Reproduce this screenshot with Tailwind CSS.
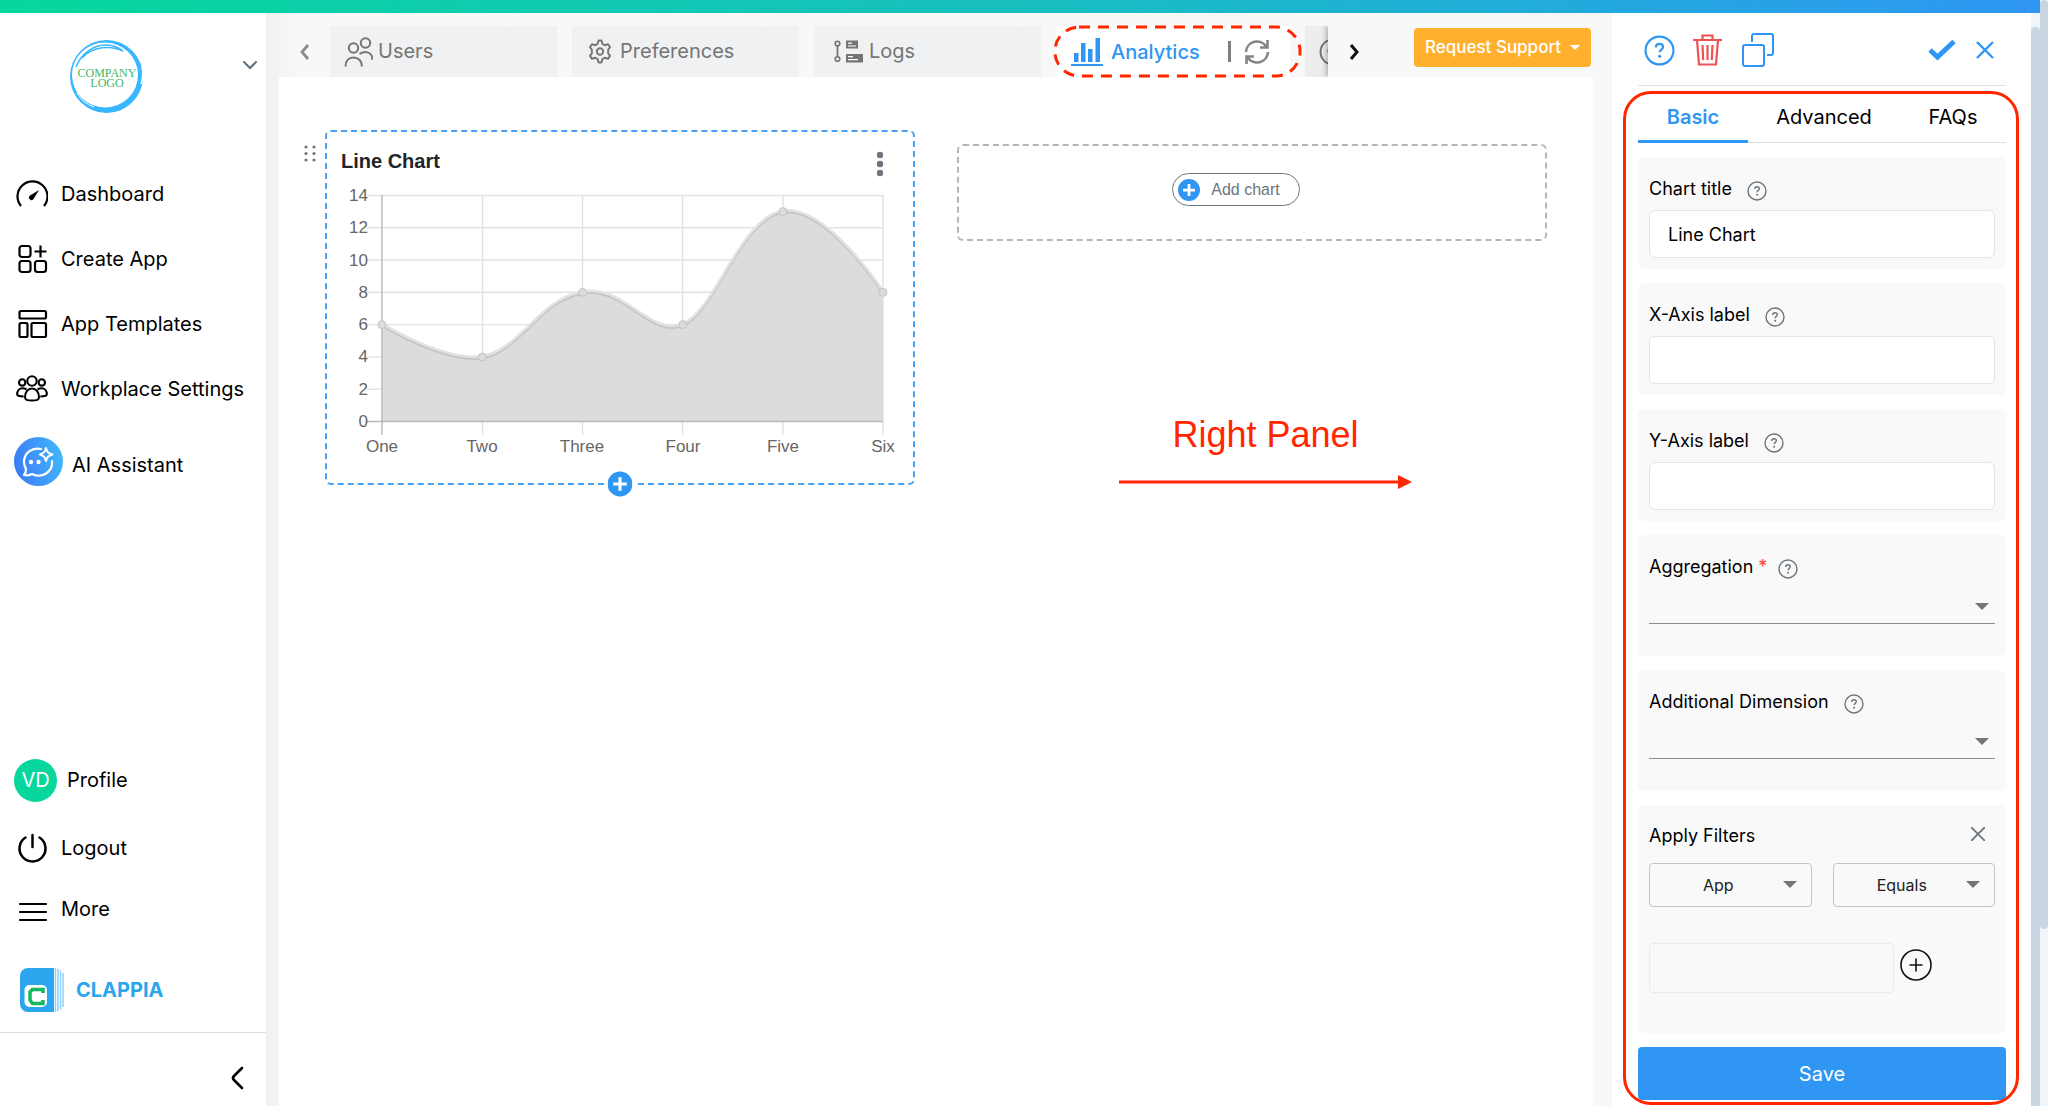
<!DOCTYPE html>
<html lang="en">
<head>
    <meta charset="UTF-8">
    <meta name="viewport" content="width=device-width, initial-scale=1.0">
    <title>Clappia - Analytics</title>
    <script src="https://cdn.jsdelivr.net/npm/@tailwindcss/browser@4"></script>
</head>
<body class="flex h-screen overflow-hidden bg-white font-[Inter,sans-serif] text-black">
    <!-- Shared icons -->
    <svg class="hidden">
        <symbol id="icon-help" viewBox="0 0 20 20">
            <circle cx="10" cy="10" r="9" fill="none" stroke="currentColor" stroke-width="1.4"></circle>
            <path d="M7.7 8c0-1.500 1-2.300 2.300-2.300s2.300.8 2.300 2c0 1.600-2.200 1.800-2.200 3.500" fill="none" stroke="currentColor" stroke-width="1.400"></path>
            <circle cx="10.100" cy="13.700" r="1" fill="currentColor"></circle>
        </symbol>
        <symbol id="icon-plus" viewBox="0 0 24 24">
            <circle cx="12" cy="12" r="12" fill="#2f96f3"></circle>
            <path d="M12 5.500v13M5.500 12h13" stroke="#fff" stroke-width="3"></path>
        </symbol>
        <symbol id="icon-caret" viewBox="0 0 14 7">
            <path d="M0 0h14L7 7z" fill="currentColor"></path>
        </symbol>
    </svg>

    <div class="flex min-w-0 flex-1 flex-col">
        <!-- Top gradient bar -->
        <div class="h-[13px] shrink-0 bg-linear-to-r from-[#07d79c] via-[#18bfbf] to-[#2f96f3]"></div>

        <div class="flex min-h-0 flex-1">
            <!-- Sidebar -->
            <aside class="flex w-[266px] shrink-0 flex-col text-xl">
                <div class="flex h-[148px] items-start justify-between pt-[26px] pr-[6px] pl-[69px]">
                    <svg class="h-[75px] w-[75px]" viewBox="0 0 75 75">
                        <path fill="#38b6ff" fill-rule="evenodd" d="M37.500 1a36.500 36.500 0 1 1 0 73 36.500 36.500 0 1 1 0-73zM36 3.500a33 32.500 0 1 0 0 65 33 32.500 0 1 0 0-65z"></path>
                        <path d="M7 28C12 15 24 6 37 6c7 0 12 2 17 6C42 6 24 7 13 19" fill="none" stroke="#38b6ff" stroke-width="1.500"></path>
                        <path d="M2 24C5 16 9 11 14 7M73 28c1 6 1 12-1 17" fill="none" stroke="#fff" stroke-width="1.500"></path>
                        <path d="M8 54c4 7 9 11 17 14" fill="none" stroke="#fff" stroke-width="1"></path>
                        <text x="38" y="38" font-family="Liberation Serif, serif" font-size="12" fill="#3bb86b" text-anchor="middle">COMPANY</text>
                        <text x="38" y="48" font-family="Liberation Serif, serif" font-size="12" fill="#3bb86b" text-anchor="middle">LOGO</text>
                    </svg>
                    <button class="mt-4 p-[2px]" aria-label="Switch workplace">
                        <svg class="h-4 w-4" viewBox="0 0 16 16" fill="none" stroke="#5f6f7a" stroke-width="2" stroke-linecap="round"><path d="M2 5l6 6 6-6"></path></svg>
                    </button>
                </div>

                <nav>
                    <a href="#" class="flex h-[65px] items-center gap-[13px] pl-4">
                        <svg class="h-8 w-8" viewBox="0 0 32 32" fill="none" stroke="#000" stroke-width="2"><path d="M5 28A15 15 0 1 1 28 28" stroke-width="2.200"></path><path d="M23 12l-5.500 9a2.500 2.500 0 1 1-3.500-3.500z" fill="#000" stroke="none"></path></svg>
                        Dashboard
                    </a>
                    <a href="#" class="flex h-[65px] items-center gap-[13px] pl-4">
                        <svg class="h-8 w-8" viewBox="0 0 32 32" fill="none" stroke="#000" stroke-width="2.200"><rect x="3.500" y="3" width="11" height="11" rx="2.500"></rect><rect x="3.500" y="18" width="11" height="11" rx="2.500"></rect><rect x="19" y="18" width="11" height="11" rx="2.500"></rect><path d="M24.500 2.500v12M18.500 8.500h12"></path></svg>
                        Create App
                    </a>
                    <a href="#" class="flex h-[65px] items-center gap-[13px] pl-4">
                        <svg class="h-8 w-8" viewBox="0 0 32 32" fill="none" stroke="#000" stroke-width="2.200"><rect x="3.500" y="3" width="26.500" height="7.500" rx="1.500"></rect><rect x="3.500" y="15" width="8" height="14" rx="1.500"></rect><rect x="15.500" y="15" width="14.500" height="14" rx="1.500"></rect></svg>
                        App Templates
                    </a>
                    <a href="#" class="flex h-[65px] items-center gap-[13px] pl-4">
                        <svg class="h-8 w-8" viewBox="0 0 32 32" fill="none" stroke="#000" stroke-width="2.100"><circle cx="16" cy="8" r="4.700"></circle><circle cx="6.200" cy="9.500" r="3.200"></circle><circle cx="25.800" cy="9.500" r="3.200"></circle><path d="M9 24c0-5 3-8.500 7-8.500s7 3.500 7 8.500c0 3-2 3.500-7 3.500S9 27 9 24zM10.500 16.500c-1-.7-2.500-1.200-4-1.200-3 0-5.300 2.500-5.300 6 0 1.700 2 2.200 6.500 2.200M21.500 16.500c1-.7 2.500-1.200 4-1.200 3 0 5.300 2.500 5.300 6 0 1.700-2 2.200-6.500 2.200"></path></svg>
                        Workplace Settings
                    </a>
                    <a href="#" class="flex h-20 items-center gap-[9px] pl-[14px]">
                        <svg class="h-[49px] w-[49px]" viewBox="0 0 49 49" fill="none">
                            <defs><linearGradient id="ai" x1="0" y1="0.600" x2="1" y2="0.400"><stop stop-color="#3b7bf6"></stop><stop offset="1" stop-color="#42b6fb"></stop></linearGradient></defs>
                            <circle cx="24.500" cy="24.500" r="24.500" fill="url(#ai)"></circle>
                            <path d="M27 12c-9-2-17 4-17 13 0 3 1 5 2 7 0 3-1 5-2 6 3 1 6 0 8-1 10 5 21-2 20-13" stroke="#fff" stroke-width="2.200" stroke-linecap="round" stroke-linejoin="round"></path>
                            <path d="M32 11c1 4 2 5 6.500 6.500C34 19 33 20 32 24c-1-4-2-5-6-6.500C30 16 31 15 32 11z" stroke="#fff" stroke-width="2" stroke-linejoin="round"></path>
                            <circle cx="17" cy="25" r="2.200" fill="#fff"></circle><circle cx="24.500" cy="25" r="2.200" fill="#fff"></circle>
                        </svg>
                        <span class="pt-2">AI Assistant</span>
                    </a>
                </nav>

                <nav class="mt-auto">
                    <a href="#" class="flex h-[70px] items-center gap-[10px] pl-[14px]">
                        <span class="flex h-[43px] w-[43px] items-center justify-center rounded-full bg-[#07d79c] text-white">VD</span>
                        Profile
                    </a>
                    <a href="#" class="flex h-[66px] items-center gap-[13px] pl-4">
                        <svg class="h-8 w-8" viewBox="0 0 32 32" fill="none" stroke="#000" stroke-width="2.500" stroke-linecap="round"><path d="M16.500 3v12M9.500 5.500a13 13 0 1 0 14 0"></path></svg>
                        Logout
                    </a>
                    <a href="#" class="flex h-[62px] items-center gap-[13px] pl-4">
                        <svg class="h-8 w-8" viewBox="0 0 32 32" stroke="#000" stroke-width="2.200" stroke-linecap="round"><path d="M4 8h26M4 16h26M4 24h26"></path></svg>
                        <span class="pb-[6px]">More</span>
                    </a>
                    <a href="#" class="flex h-[90px] items-center gap-3 border-b border-[#dedede] pt-1 pl-5 text-xl font-bold text-[#2aa5ee]">
                        <svg class="h-11 w-11" viewBox="0 0 44 44">
                            <path d="M8 0h26v44H8a8 8 0 0 1-8-8V8a8 8 0 0 1 8-8z" fill="#2aa5ee"></path>
                            <path d="M35.500 0v44M38 1v42M40.500 2.500v39M43 5v34" stroke="#8fd0f8" stroke-width="1.500"></path>
                            <rect x="4.500" y="17" width="22.500" height="22" rx="5" fill="#fff"></rect>
                            <path d="M23 25v-3.500H12.500L10 24v8l2.500 3.500H23V32" fill="none" stroke="#11b85f" stroke-width="3.500"></path>
                        </svg>
                        CLAPPIA
                    </a>
                </nav>
                <div class="flex h-[73px] shrink-0 items-center justify-end pt-4 pr-[17px]">
                    <button aria-label="Collapse sidebar"><svg class="h-6 w-6" viewBox="0 0 24 24" fill="none" stroke="#000" stroke-width="2.600" stroke-linecap="round"><path d="M17 2l-8 8q-2 2 0 4l8 8"></path></svg></button>
                </div>
            </aside>

            <!-- Workspace -->
            <main class="flex min-w-0 flex-1 flex-col bg-[#f8f8f8] bg-linear-to-r from-[#f0f0f0] to-[#f8f8f8] to-[34px] pr-[19px] pl-[13px]">
                <header class="flex h-16 shrink-0 items-end text-xl text-[#757575]">
                    <button class="flex h-[51px] w-[51px] shrink-0 items-center justify-center" aria-label="Previous tabs">
                        <svg class="h-5 w-5" viewBox="0 0 20 20" fill="none" stroke="#8b8b8b" stroke-width="2.800"><path d="M13 3l-6 7 6 7"></path></svg>
                    </button>
                    <div class="flex min-w-0 flex-1 gap-[15px] overflow-hidden">
                        <button class="flex h-[51px] w-[227px] shrink-0 items-center gap-[5px] bg-[#f0f1f2] pl-[14px]">
                            <svg class="h-[30px] w-[29px]" viewBox="0 0 29 30" fill="none" stroke="#757575" stroke-width="2"><circle cx="9.500" cy="11" r="4.700"></circle><circle cx="21.500" cy="6" r="4.700"></circle><path d="M1.500 29.500c0-5.500 3-9 8-9s8.500 3.500 8.500 9M15.500 17c2-1.500 4-2 6-2 4.500 0 7 3.500 7 8"></path></svg>
                            <span class="pb-[2px]">Users</span>
                        </button>
                        <button class="flex h-[51px] w-[227px] shrink-0 items-center gap-2 bg-[#f0f1f2] pl-4">
                            <svg class="h-[25px] w-6" viewBox="0 0 24 26" fill="none" stroke="#757575" stroke-width="2" stroke-linejoin="round"><path d="M10.500 1.500h3l1 3.500 2.500 1.500 3.500-1 2 3-2 2.500v4l2 2.500-2 3-3.500-1-2.500 1.500-1 3.500h-3l-1-3.500L7 19.500l-3.500 1-2-3 2-2.500v-4l-2-2.500 2-3 3.500 1L9.500 5z"></path><circle cx="12" cy="13" r="3.300"></circle></svg>
                            <span class="pb-[2px]">Preferences</span>
                        </button>
                        <button class="flex h-[51px] w-[227px] shrink-0 items-center gap-[6px] bg-[#f0f1f2] pl-5">
                            <svg class="h-[23px] w-[29px]" viewBox="0 0 29 23" fill="none" stroke="#757575"><circle cx="3.500" cy="3.500" r="2.300" stroke-width="1.600"></circle><circle cx="3.500" cy="19" r="2.300" stroke-width="1.600"></circle><path d="M3.500 6v11" stroke-width="1.800"></path><path d="M12 0.500h12v8H12zM12 14h17v8.500H12z" fill="#757575" stroke="none"></path><path d="M14 3.200h4M14 6h8M14 16.700h5M14 19.700h10" stroke="#fff" stroke-width="1.200"></path></svg>
                            <span class="pb-[2px]">Logs</span>
                        </button>
                        <div class="flex h-[51px] w-[234px] shrink-0 items-center bg-white pl-[15px]">
                            <button class="flex items-center gap-2 font-medium text-[#2f96f3]">
                                <svg class="h-[28px] w-8" viewBox="0 0 32 28" fill="#2f96f3"><path d="M3 15h4.500v9H3zM10 5h4.500v19H10zM17 11h4.500v13H17zM24.500 0H29v24h-4.500zM0 26h32v2H0z"></path></svg>
                                Analytics
                            </button>
                            <span class="mr-[13px] ml-7 h-[21px] w-[3px] bg-[#808080]"></span>
                            <button aria-label="Refresh"><svg class="h-[26px] w-[26px]" viewBox="0 0 26 26" fill="none" stroke="#858585" stroke-width="2.600"><path d="M2 13A11 11 0 0 1 22.500 8M24 13A11 11 0 0 1 3.500 18M23.500 1v7.500H16M2.500 25v-7.500H10"></path></svg></button>
                        </div>
                        <button class="flex h-[51px] w-[227px] shrink-0 items-center bg-[#ededee] pl-[14px]" aria-label="More tabs">
                            <svg class="h-7 w-7" viewBox="0 0 28 28" fill="none" stroke="#757575" stroke-width="2"><circle cx="14" cy="14" r="12.500"></circle><path d="M14 8v7M9 11v4" stroke-width="1"></path></svg>
                        </button>
                    </div>
                    <button class="flex h-[51px] w-[51px] shrink-0 items-center justify-center shadow-[-2px_0_5px_rgba(0,0,0,0.25)] [clip-path:inset(0_0_0_-8px)]" aria-label="Next tabs">
                        <svg class="h-5 w-5" viewBox="0 0 20 20" fill="none" stroke="#111" stroke-width="3"><path d="M7 3l6 7-6 7"></path></svg>
                    </button>
                    <button class="mr-[2px] mb-[10px] ml-[35px] flex h-[39px] w-[177px] shrink-0 items-center justify-center gap-[9px] rounded bg-[#ffb02e] text-[17px] font-medium text-white">
                        Request Support
                        <svg class="h-[5px] w-[10px]"><use href="#icon-caret"></use></svg>
                    </button>
                </header>

                <section class="grid flex-1 grid-cols-2 items-start gap-[42px] bg-white pt-[53px] pr-[46px] pl-[46px]">
                    <!-- Line chart card -->
                    <article class="relative rounded-md border-2 border-dashed border-[#45a1f5] pb-[26px]">
                        <svg class="absolute top-3 -left-[25px] h-5 w-4" viewBox="0 0 16 20" fill="#757575"><circle cx="4" cy="3" r="1.600"></circle><circle cx="12" cy="3" r="1.600"></circle><circle cx="4" cy="9.500" r="1.600"></circle><circle cx="12" cy="9.500" r="1.600"></circle><circle cx="4" cy="16" r="1.600"></circle><circle cx="12" cy="16" r="1.600"></circle></svg>
                        <div class="flex h-[53px] items-center justify-between pt-1 pr-[29px] pl-[14px]">
                            <h2 class="font-['Liberation_Sans',Arial,sans-serif] text-xl font-bold text-[#212529]">Line Chart</h2>
                            <button class="pt-[6px]" aria-label="Chart menu"><svg class="h-[26px] w-2" viewBox="0 0 8 26" fill="#6c757d"><circle cx="4" cy="4" r="3.200"></circle><circle cx="4" cy="13" r="3.200"></circle><circle cx="4" cy="22" r="3.200"></circle></svg></button>
                        </div>
                        <svg class="block h-auto w-full" viewBox="327 185 586 272">
                            <!-- Grid -->
                            <path d="M367 195.500H883M367 227.800H883M367 260H883M367 292.300H883M367 324.600H883M367 356.900H883M367 389.200H883M482.500 195V435M582.500 195V435M682.500 195V435M783 195V435M883 195V435" stroke="#e2e2e2" stroke-width="1.400"></path>
                            <!-- Series area -->
                            <path d="M382 324.600C382 324.600 444.700 363 482.300 357S540 299.300 582.600 292.400 649.900 337.900 682.800 324.600 739.800 218.600 783 211.600 883 292.300 883 292.300V421.500H382z" fill="#dcdcdc"></path>
                            <path d="M382 325.600C382 325.600 444.700 364 482.300 358S540 300.300 582.600 293.400 649.900 338.900 682.800 325.600 739.800 219.600 783 212.600 883 293.300 883 293.300" fill="none" stroke="#c6c6c6" stroke-width="2.500"></path>
                            <path d="M382 323.600C382 323.600 444.700 362 482.300 356S540 298.300 582.600 291.400 649.900 336.900 682.800 323.600 739.800 217.600 783 210.600 883 291.300 883 291.300" fill="none" stroke="#e2e2e2" stroke-width="2.500"></path>
                            <path d="M382 195V435M367 421.500H883" stroke="#b8b8b8" stroke-width="1.400"></path>
                            <g fill="#dcdcdc" stroke="#c4c4c4"><circle cx="382" cy="324.600" r="4"></circle><circle cx="482.300" cy="357" r="4"></circle><circle cx="582.600" cy="292.400" r="4"></circle><circle cx="682.800" cy="324.600" r="4"></circle><circle cx="783" cy="211.600" r="4"></circle><circle cx="883" cy="292.300" r="4"></circle></g>
                            <g font-family="Liberation Sans, Arial, sans-serif" font-size="17" fill="#666" text-anchor="end"><text x="368" y="201">14</text><text x="368" y="233">12</text><text x="368" y="266">10</text><text x="368" y="298">8</text><text x="368" y="330">6</text><text x="368" y="362">4</text><text x="368" y="395">2</text><text x="368" y="427">0</text></g>
                            <g font-family="Liberation Sans, Arial, sans-serif" font-size="17" fill="#666" text-anchor="middle"><text x="382" y="452">One</text><text x="482" y="452">Two</text><text x="582" y="452">Three</text><text x="683" y="452">Four</text><text x="783" y="452">Five</text><text x="883" y="452">Six</text></g>
                        </svg>
                        <button class="absolute -bottom-[14px] left-1/2 -translate-x-1/2 rounded-full bg-white px-[3px]" aria-label="Add chart below"><svg class="block h-[26px] w-[25px]"><use href="#icon-plus"></use></svg></button>
                    </article>

                    <div>
                        <div class="mt-[14px] flex h-[97px] items-start justify-center rounded-md border-2 border-dashed border-[#b4b7b9] pt-[27px] pr-8">
                            <button class="flex h-[33px] items-center gap-[11px] rounded-full border border-[#6c757d] pr-[19px] pl-[5px] font-['Liberation_Sans',Arial,sans-serif] text-base text-[#6c757d]">
                                <svg class="h-[22px] w-[22px]"><use href="#icon-plus"></use></svg>
                                Add chart
                            </button>
                        </div>
                        <!-- Annotation pointing to the settings panel -->
                        <div class="mt-[174px] flex flex-col items-center gap-5 pl-[27px]">
                            <p class="font-['Liberation_Sans',Arial,sans-serif] text-4xl text-[#ff2600]">Right Panel</p>
                            <svg class="h-[14px] w-[293px]" viewBox="0 0 293 14" fill="#ff2600"><path d="M0 5.500h279V0l14 7-14 7V8.500H0z"></path></svg>
                        </div>
                    </div>
                </section>
            </main>

            <!-- Chart settings panel -->
            <aside class="relative flex w-[419px] shrink-0 flex-col pr-[25px] pl-[26px] text-lg">
                <div class="flex h-[73px] shrink-0 items-center border-b border-[#dee2e6] pt-[2px] pr-3 pl-[6px]">
                    <button class="mr-[18px] text-[#2f96f3]" aria-label="Help"><svg class="h-[31px] w-[31px]"><use href="#icon-help"></use></svg></button>
                    <button class="mr-5" aria-label="Delete"><svg class="h-8 w-[29px]" viewBox="0 0 29 32" fill="none" stroke="#ee5253" stroke-width="2.200"><path d="M0 6h29M9.500 6V1.500h10V6M4 6l2 24.500h17L25 6M9.500 11l.7 15M14.500 11v15M19.500 11l-.7 15"></path></svg></button>
                    <button aria-label="Duplicate"><svg class="h-[34px] w-8" viewBox="0 0 32 34" fill="none" stroke="#2f96f3" stroke-width="2"><rect x="1" y="12" width="21" height="21" rx="2"></rect><path d="M10 9V3q0-2 2-2h17q2 0 2 2v17q0 2-2 2h-4"></path></svg></button>
                    <button class="ml-auto" aria-label="Confirm"><svg class="h-[22px] w-7" viewBox="0 0 28 22" fill="none" stroke="#2f96f3" stroke-width="5"><path d="M2 11l7.500 7L26 2.500"></path></svg></button>
                    <button class="ml-5" aria-label="Close"><svg class="h-[18px] w-[18px]" viewBox="0 0 18 18" stroke="#2f96f3" stroke-width="2.400"><path d="M1 1l16 16M17 1L1 17"></path></svg></button>
                </div>

                <div class="flex h-[57px] shrink-0 border-b border-[#dee2e6] text-xl">
                    <button class="-mb-px w-[110px] border-b-3 border-[#2f96f3] pt-2 font-semibold text-[#2f96f3]">Basic</button>
                    <button class="flex-1 pt-[6px]">Advanced</button>
                    <button class="w-[106px] pt-[6px]">FAQs</button>
                </div>

                <form class="mt-[14px] flex flex-col gap-[14px]">
                    <div class="rounded-md bg-[#f9f9f9] px-[11px] pt-5 pb-[11px]">
                        <div class="mb-[9px] flex h-6 items-center gap-[15px]">
                            <label for="chart-title">Chart title</label>
                            <svg class="mt-1 h-5 w-5 text-[#6c757d]"><use href="#icon-help"></use></svg>
                        </div>
                        <input id="chart-title" type="text" value="Line Chart" class="block h-12 w-full rounded-md border border-[#e4e4e4] bg-white px-[18px] text-lg">
                    </div>
                    <div class="rounded-md bg-[#f9f9f9] px-[11px] pt-5 pb-[11px]">
                        <div class="mb-[9px] flex h-6 items-center gap-[15px]">
                            <label for="x-label">X-Axis label</label>
                            <svg class="mt-1 h-5 w-5 text-[#6c757d]"><use href="#icon-help"></use></svg>
                        </div>
                        <input id="x-label" type="text" class="block h-12 w-full rounded-md border border-[#e4e4e4] bg-white px-[18px] text-lg">
                    </div>
                    <div class="rounded-md bg-[#f9f9f9] px-[11px] pt-5 pb-[11px]">
                        <div class="mb-[9px] flex h-6 items-center gap-[15px]">
                            <label for="y-label">Y-Axis label</label>
                            <svg class="mt-1 h-5 w-5 text-[#6c757d]"><use href="#icon-help"></use></svg>
                        </div>
                        <input id="y-label" type="text" class="block h-12 w-full rounded-md border border-[#e4e4e4] bg-white px-[18px] text-lg">
                    </div>
                    <div class="rounded-md bg-[#f9f9f9] px-[11px] pt-5 pb-8">
                        <div class="flex h-6 items-center gap-[11px]">
                            <label for="aggregation">Aggregation <span class="text-[#f5443a]">*</span></label>
                            <svg class="mt-1 h-5 w-5 text-[#6c757d]"><use href="#icon-help"></use></svg>
                        </div>
                        <div class="relative">
                            <select id="aggregation" class="block h-[45px] w-full appearance-none border-b border-[#8c8c8c]"><option></option></select>
                            <svg class="pointer-events-none absolute top-6 right-[6px] h-[7px] w-[14px] text-[#757575]"><use href="#icon-caret"></use></svg>
                        </div>
                    </div>
                    <div class="rounded-md bg-[#f9f9f9] px-[11px] pt-5 pb-8">
                        <div class="flex h-6 items-center gap-[15px]">
                            <label for="dimension">Additional Dimension</label>
                            <svg class="mt-1 h-5 w-5 text-[#6c757d]"><use href="#icon-help"></use></svg>
                        </div>
                        <div class="relative">
                            <select id="dimension" class="block h-[45px] w-full appearance-none border-b border-[#8c8c8c]"><option></option></select>
                            <svg class="pointer-events-none absolute top-6 right-[6px] h-[7px] w-[14px] text-[#757575]"><use href="#icon-caret"></use></svg>
                        </div>
                    </div>
                    <div class="rounded-md bg-[#f9f9f9] px-[11px] pt-[19px] pb-10">
                        <div class="mb-[15px] flex h-6 items-center justify-between pr-[10px]">
                            <span>Apply Filters</span>
                            <button type="button" class="mb-1" aria-label="Remove filter"><svg class="h-[14px] w-[14px]" viewBox="0 0 14 14" stroke="#6c757d" stroke-width="1.800"><path d="M0 0l14 14M14 0L0 14"></path></svg></button>
                        </div>
                        <div class="grid grid-cols-2 gap-[21px] text-base text-[#212121]">
                            <div class="relative">
                                <select aria-label="Filter field" class="block h-11 w-full appearance-none rounded border border-[#c4c4c4] pr-6 [text-align-last:center]"><option>App</option></select>
                                <svg class="pointer-events-none absolute top-[18px] right-[15px] h-[7px] w-[14px] text-[#757575]"><use href="#icon-caret"></use></svg>
                            </div>
                            <div class="relative">
                                <select aria-label="Filter condition" class="block h-11 w-full appearance-none rounded border border-[#c4c4c4] pr-6 [text-align-last:center]"><option>Equals</option></select>
                                <svg class="pointer-events-none absolute top-[18px] right-[15px] h-[7px] w-[14px] text-[#757575]"><use href="#icon-caret"></use></svg>
                            </div>
                        </div>
                        <div class="mt-9 flex items-center gap-[6px]">
                            <input type="text" aria-label="Filter value" class="h-[50px] w-[245px] rounded border border-[#ebebeb] px-4">
                            <button type="button" class="mb-[6px]" aria-label="Add filter"><svg class="h-8 w-8" viewBox="0 0 32 32" fill="none" stroke="#111" stroke-width="1.600"><circle cx="16" cy="16" r="15"></circle><path d="M16 9.500v13M9.500 16h13"></path></svg></button>
                        </div>
                    </div>
                    <button type="submit" class="h-[53px] rounded bg-[#2f96f3] text-xl text-white">Save</button>
                </form>

                <!-- Highlight around the panel body -->
                <div class="pointer-events-none absolute top-[78px] right-3 bottom-px left-[11px] rounded-[28px] border-3 border-[#ff2600]"></div>
            </aside>

            <!-- Panel scrollbar -->
            <div class="flex w-[9px] shrink-0 flex-col bg-[#f1f4f9] pt-[14px]"><div class="flex-1 rounded-t-full bg-[#cad5e2]"></div></div>
        </div>
    </div>

    <!-- Page scrollbar -->
    <div class="w-2 shrink-0 bg-[#f1f4f9]"><div class="h-[84%] rounded-full bg-[#cad5e2]"></div></div>

    <!-- Highlight around the active tab -->
    <svg class="pointer-events-none absolute top-[25px] left-[1053px] h-[53px] w-[249px]" viewBox="0 0 249 53" fill="none"><rect x="2" y="2" width="245" height="49" rx="24" stroke="#ff2600" stroke-width="3" stroke-dasharray="11 8"></rect></svg>
</body>
</html>
